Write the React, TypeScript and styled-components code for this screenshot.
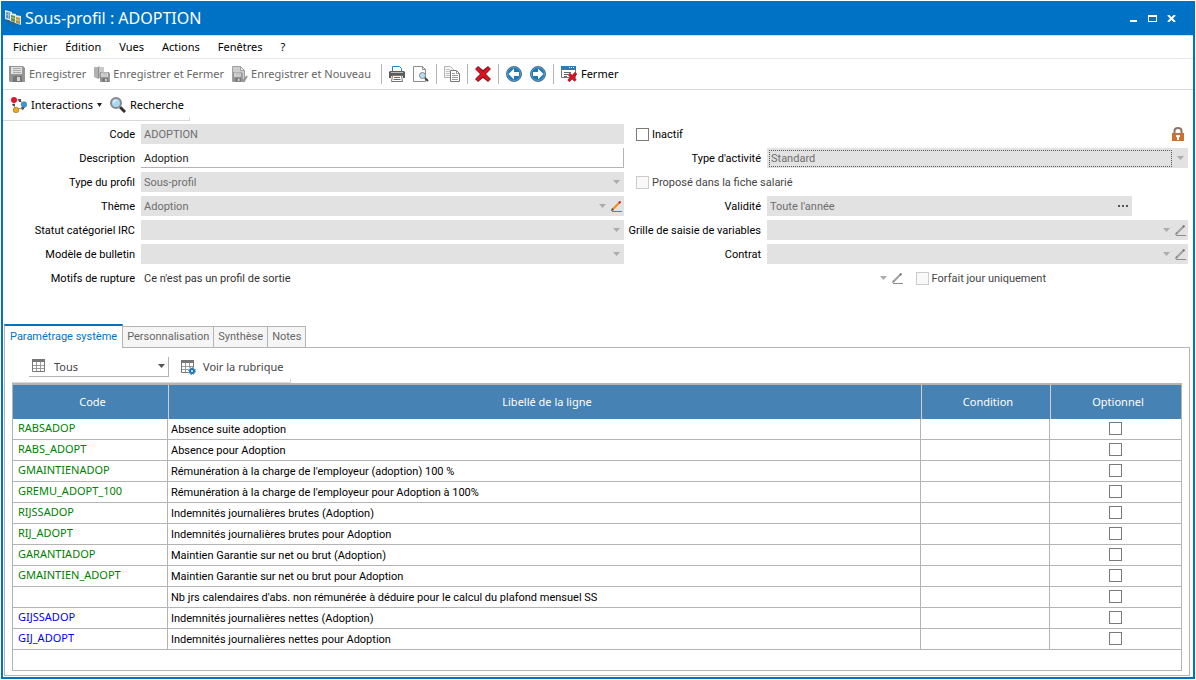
import React from "react";
import type { ReactNode } from "react";
import styled, { createGlobalStyle, css } from "styled-components";

const color = {
  blue: "#0072c6",
  head: "#4682b4",
  grid: "#b4b4b4",
  line: "#d9d9d9",
  field: "#e2e2e2",
  muted: "#6d6d6d",
  text: "#000",
};

const ui = `"Noto Sans", "Open Sans", sans-serif`;
const body = `Roboto, "Liberation Sans", sans-serif`;

const GlobalStyle = createGlobalStyle`
  *, *::before, *::after { box-sizing: border-box; }
  body { margin: 0; background: #fff; color: ${color.text}; font: 11px/16px ${body}; }
  button, input, select { font: inherit; color: inherit; margin: 0; padding: 0; border: 0; border-radius: 0; background: none; }
  svg { display: block; flex: none; }
`;

/* ---------- frame ---------- */

const Frame = styled.div`
  display: flex;
  flex-direction: column;
  min-height: calc(100vh - 2px);
  margin: 1px;
  border: 2px solid ${color.blue};
  border-top: 0;
`;

const TitleBar = styled.header`
  display: flex;
  align-items: center;
  gap: 4px;
  height: 34px;
  padding: 0 12px 0 2px;
  background: ${color.blue};
  color: #fff;
`;

const Title = styled.h1`
  flex: 1;
  margin: 0;
  font: 400 16px/24px ${ui};
`;

const WindowButtons = styled.div`
  display: flex;
`;

const WindowButton = styled.button`
  display: flex;
  width: 19px;
  height: 20px;
  align-items: center;
  justify-content: center;
`;

const MenuBar = styled.nav`
  display: flex;
  gap: 18px;
  height: 24px;
  padding-left: 10px;
  border-top: 1px solid ${color.line};
  border-bottom: 1px solid #e6e6e6;
  font-family: ${ui};
`;

const ToolBar = styled.div`
  display: flex;
  align-items: center;
  height: 31px;
  padding-left: 2px;
  border-bottom: 1px solid ${color.line};
  font-family: ${ui};
`;

const ShortToolBar = styled(ToolBar)`
  position: relative;
  align-self: flex-start;
  padding: 0 2px 0 4px;

  &::after {
    content: "";
    position: absolute;
    right: 0;
    bottom: 0;
    width: 1px;
    height: 3px;
    background: ${color.line};
  }
`;

const ToolButton = styled.button<{ $gap?: number }>`
  display: flex;
  align-items: center;
  gap: ${(p) => p.$gap ?? 4}px;
  height: 24px;
  padding: 0 4px;
  white-space: nowrap;

  &:disabled { color: #666; }
`;

const Separator = styled.span<{ $wide?: boolean }>`
  width: 1px;
  height: 20px;
  margin: 0 3px 0 ${(p) => (p.$wide ? 6 : 3)}px;
  background: ${color.grid};
`;

/* ---------- form ---------- */

const Form = styled.form`
  display: grid;
  grid-template-columns: minmax(0, 621fr) minmax(0, 560fr);
  gap: 4px;
  padding: 3px 5px 36px 0;
`;

const Column = styled.div`
  display: flex;
  flex-direction: column;
  gap: 4px;
`;

const Row = styled.div`
  display: flex;
  align-items: center;
  gap: 6px;
  height: 20px;
`;

const WideRow = styled(Row)`
  grid-column: 1 / -1;
  padding-right: 142px;
`;

const FieldLabel = styled.label<{ $right?: boolean }>`
  flex: none;
  width: ${(p) => (p.$right ? 133 : 132)}px;
  padding-top: 2px;
  text-align: right;
  white-space: nowrap;
`;

const Field = styled.div<{ $kind?: "plain" | "edit"; $tight?: boolean }>`
  display: flex;
  flex: 1;
  align-items: center;
  gap: 5px;
  min-width: 0;
  height: 20px;
  padding-right: ${(p) => (p.$tight ? 2 : 4)}px;
  background: ${color.field};
  color: ${color.muted};

  ${(p) =>
    p.$kind &&
    css`
      background: #fff;
      color: #333;
    `}
  ${(p) =>
    p.$kind === "edit" &&
    css`
      align-items: flex-start;
      border-right: 1px solid ${color.grid};
      border-bottom: 1px solid ${color.grid};
      color: #222;
    `}
`;

const control = css`
  flex: 1;
  min-width: 0;
  height: 20px;
  padding: 0 3px;
  appearance: none;
  opacity: 1;
  outline: 0;
`;

const TextInput = styled.input`
  ${control}
`;

const Select = styled.select<{ $focused?: boolean }>`
  ${control}
  padding-top: 2px;
  ${(p) =>
    p.$focused &&
    css`
      height: 17px;
      margin-left: 2px;
      padding: 0 0 0 1px;
      border: 1px dotted #555;
    `}
`;

const IconButton = styled.button`
  display: flex;
  align-items: center;
  justify-content: center;
`;

const CheckBox = styled.input`
  display: block;
  flex: none;
  appearance: none;
  width: 13px;
  height: 13px;
  border: 1px solid #7a7a7a;
  background: #fff;

  &:disabled { border-color: #ccc; background: #f9f9f9; }
`;

const CheckLabel = styled.label<{ $dim?: boolean }>`
  display: flex;
  align-items: center;
  gap: 3px;
  color: ${(p) => (p.$dim ? "#444" : color.text)};
  white-space: nowrap;
`;

const CheckText = styled.span`
  padding-top: 1px;
`;

const CheckRow = styled(Row)`
  justify-content: space-between;
  padding: 0 4px 0 8px;
`;

const CheckCell = styled.div`
  padding-left: 5px;
`;

const ShortField = styled.div`
  display: flex;
  flex: 1;
  padding-right: 10%;
`;

/* ---------- tabs and table ---------- */

const Tabs = styled.div`
  display: flex;
  align-items: flex-end;
  height: 24px;
  margin-left: 1px;
  z-index: 1;
`;

const Tab = styled.button<{ $active?: boolean }>`
  height: 22px;
  padding: 0 4px;
  border: 1px solid ${color.grid};
  border-left: 0;
  background: #f5f5f5;
  color: #666;

  ${(p) =>
    p.$active &&
    css`
      height: 24px;
      padding: 0 5px;
      border-left: 1px solid ${color.grid};
      border-top: 2px solid ${color.blue};
      border-bottom: 0;
      background: #fff;
      color: ${color.blue};
    `}
`;

const Panel = styled.section`
  display: flex;
  flex: 1;
  flex-direction: column;
  margin: -1px 3px 1px 1px;
  padding: 0 7px 4px;
  border: 1px solid ${color.grid};
`;

const PanelTools = styled(ShortToolBar)`
  gap: 7px;
  height: 35px;
  padding: 3px 4px 0 17px;
  color: #444;
`;

const Filter = styled.label`
  display: flex;
  align-items: center;
  gap: 4px;
  width: 140px;
  height: 20px;
  padding: 0 3px 0 2px;
  border-right: 1px solid ${color.grid};
  border-bottom: 1px solid ${color.grid};
`;

const TableBox = styled.div`
  flex: 1;
  border: 1px solid ${color.grid};
  border-top-width: 2px;
`;

const Table = styled.table`
  width: 100%;
  table-layout: fixed;
  border-spacing: 0;
`;

const Th = styled.th<{ $width?: number }>`
  width: ${(p) => (p.$width ? `${p.$width}px` : "auto")};
  height: 34px;
  padding: 0 0 0 4px;
  border-left: 1px solid #d0d0d0;
  background: ${color.head};
  color: #fff;
  font: 400 11px/16px ${ui};

  &:first-child { border-left: 0; }
`;

const Td = styled.td`
  height: 21px;
  padding: 2px 3px 0;
  border-right: 1px solid ${color.grid};
  border-bottom: 1px solid ${color.grid};
  white-space: nowrap;

  &:last-child { border-right: 0; }
`;

const CodeTd = styled(Td)<{ $tone: string }>`
  padding: 0 5px 2px;
  color: ${(p) => p.$tone};
  font-family: ${ui};
`;

const CheckTd = styled(Td)`
  padding: 0 3px 1px;
  ${CheckBox} { margin: 0 auto; }
`;

/* ---------- icons ---------- */

const Icon = ({ children, w = 16, h = 16 }: { children: ReactNode; w?: number; h?: number }) => (
  <svg width={w} height={h} viewBox={`0 0 ${w} ${h}`} fill="none" aria-hidden="true">
    {children}
  </svg>
);

const AppIcon = () => (
  <Icon>
    <path d="M0 0l7 2v9l-7-2z" fill="#e4eaee" />
    <path d="M1 2l5 1v6l-5-1z" fill="#5b8fc0" />
    <path d="M1 4.500l5 1M3.500 2v6" stroke="#9dc0dd" />
    <path d="M5 3l6 1v9l-6-2z" fill="#e6ece0" />
    <path d="M6 5l4 1v6l-4-1z" fill="#5f9150" />
    <path d="M6 7.500l4 1" stroke="#a6c79b" />
    <path d="M10 5l6 1v9l-6-2z" fill="#ece5cc" />
    <path d="M11 7l4 1v6l-4-1z" fill="#b0924a" />
    <path d="M11 9.500l4 1" stroke="#e0cc96" />
    <path d="M1 10l4 1v3zM6 12l4 1v3z" fill="#54504d" />
  </Icon>
);

const Floppy = ({ x = 0, y = 0, s = 1 }) => (
  <g transform={`translate(${x} ${y}) scale(${s})`}>
    <path d="M0 0h14l2 2v14H1l-1-1z" fill="#949494" />
    <path d="M2 1h11v7H2z" fill="#e2e2e2" />
    <path d="M4 2.500h8M4 4.500h8M4 6.500h8" stroke="#a8a8a8" />
    <path d="M4 10h9v6H4z" fill="#777" />
    <path d="M8 11h3v4H8z" fill="#d4d4d4" />
  </g>
);

const SaveIcon = () => (
  <Icon>
    <Floppy />
  </Icon>
);

const SaveCloseIcon = () => (
  <Icon>
    <path d="M0 1h4l2-1v12l-2 1-4-2z" fill="#b2b2b2" />
    <path d="M5 1h5v6H5z" fill="#c9c9c9" />
    <path d="M4.500 1v11" stroke="#8f8f8f" />
    <Floppy x={6} y={6} s={0.62} />
  </Icon>
);

const SaveNewIcon = () => (
  <Icon>
    <path d="M.5.500h8l4 4v11H.5z" fill="#cdcdcd" stroke="#a0a0a0" />
    <path d="M8.500.500v4h4z" fill="#eee" stroke="#a0a0a0" />
    <Floppy x={1} y={6} s={0.6} />
    <path d="M10 13l2 2 3-5" stroke="#999" strokeWidth="2" />
  </Icon>
);

const PrintIcon = () => (
  <Icon>
    <path d="M3.500 6V.5h7l2 2V6" fill="#fff" stroke="#2b7cb8" />
    <path d="M1 5h14l1 1v6h-2v-2H2v2H0V6z" fill="#5c5c5c" />
    <path d="M2 6.500h12" stroke="#bbb" />
    <path d="M3.500 9.500h9l1 6h-11z" fill="#fff" stroke="#777" />
    <path d="M5 11.500h6M4.500 13.500h7" stroke="#2b7cb8" />
  </Icon>
);

const PreviewIcon = () => (
  <Icon>
    <path d="M.5.500h9l3 3v12H.5z" fill="#fbfbfb" stroke="#8c8c8c" />
    <path d="M9.500.500v3h3" stroke="#8c8c8c" />
    <circle cx="9.500" cy="9.500" r="3" fill="#b9dcf3" stroke="#7d8790" />
    <path d="M12 12l3 3" stroke="#444" strokeWidth="2" />
  </Icon>
);

const CopyIcon = () => (
  <Icon>
    <path d="M.5.500h6l3 3v8H.5z" fill="#f4f4f4" stroke="#b5b5b5" />
    <path d="M2 3.500h4M2 5.500h5M2 7.500h4M2 9.500h4" stroke="#c4c4c4" />
    <path d="M6.500 4.500h6l3 3v8h-9z" fill="#fff" stroke="#777" />
    <path d="M12.500 4.500v3h3M8 7.500h3M8 9.500h6M8 11.500h6M8 13.500h6" stroke="#999" />
  </Icon>
);

const DeleteIcon = () => (
  <Icon>
    <path d="M0 3l3-3 5 4 5-4 3 3-5 5 5 5-3 3-5-4-5 4-3-3 5-5z" fill="#7d1a20" />
    <path d="M1 3l2-2 5 5 5-5 2 2-5 5 5 5-2 2-5-5-5 5-2-2 5-5z" fill="#df1020" />
  </Icon>
);

const ArrowIcon = ({ flip = false }) => (
  <Icon>
    <circle cx="8" cy="8" r="7.500" fill="#1d76b8" stroke="#596c7c" />
    <circle cx="8" cy="8" r="6.500" stroke="#4da0d8" />
    <path d={flip ? "M13.500 8L8 2.500V6H3v4h5v3.500z" : "M2.500 8L8 2.500V6h5v4H8v3.500z"} fill="#fff" />
  </Icon>
);

const CloseFormIcon = () => (
  <Icon>
    <path d="M.5.500h14v11H.5z" fill="#fff" stroke="#777" />
    <path d="M0 0h15v4H0z" fill="#2b7cb8" />
    <path d="M8 1.500h1M10 1.500h1M12 1.500h1" stroke="#fff" />
    <path d="M3 6.500h7M3 8.500h4M3 10.500h3" stroke="#666" />
    <path d="M8 8l6.500 6.500M15 7l-7.500 8" stroke="#8c1a20" strokeWidth="3" />
    <path d="M8 8l6.500 6.500M15 7l-7.500 8" stroke="#e01022" strokeWidth="2" />
  </Icon>
);

const LinksIcon = () => (
  <Icon>
    <path d="M4 3h5l3 4M12 9q-1 3-6 3M3 5q-1 3 1 7" stroke="#8d9297" />
    <path d="M7 2h3v3H8zM11 10h3l-2 3-2-1zM1 7h3v2H2z" fill="#4b4f52" />
    <circle cx="3" cy="3" r="3" fill="#e01433" />
    <circle cx="13" cy="7.500" r="2.800" fill="#2d9be0" stroke="#5b7282" strokeWidth=".6" />
    <circle cx="5" cy="13" r="2.800" fill="#f3a712" stroke="#8a6a24" strokeWidth=".6" />
  </Icon>
);

const SearchIcon = () => (
  <Icon>
    <path d="M10 10l5 5" stroke="#333" strokeWidth="3" />
    <circle cx="6" cy="6" r="5" fill="#a9d8f5" stroke="#85898c" strokeWidth="2" />
    <path d="M3.500 6q0-3 3-3" stroke="#fff" />
  </Icon>
);

const GridIcon = ({ gear = false }) => (
  <Icon>
    <path d="M1.500 1.500h12v12h-12z" fill="#fff" stroke="#777" />
    <path d="M1 1h13v3H1z" fill="#777" />
    <path d="M2 7.500h11M2 10.500h11M5.500 4v9M9.500 4v9" stroke="#999" />
    {gear && (
      <>
        <circle cx="12" cy="12" r="4" fill="#fff" />
        <circle cx="12" cy="12" r="2" stroke="#1d76b8" strokeWidth="2" />
        <circle cx="12" cy="12" r="3.500" stroke="#1d76b8" strokeDasharray="1.400 1.350" />
      </>
    )}
  </Icon>
);

const LockIcon = () => (
  <Icon w={12} h={14}>
    <path d="M2.500 6V4q0-3 3.500-3t3.500 3v2" stroke="#8d7565" strokeWidth="2" />
    <path d="M0 6h12v8H0z" fill="#c4733b" />
    <path d="M5 10h2v3H5zM4 8h4v2H4z" fill="#fff" />
  </Icon>
);

const Caret = ({ tone = "#acacac", w = 7 }) => (
  <Icon w={w} h={4}>
    <path d={`M0 0h${w}L${w / 2} 4z`} fill={tone} />
  </Icon>
);

const Pencil = ({ live = false }) => (
  <Icon w={11} h={11}>
    <path d="M1 10.500h10" stroke={live ? "#2d8ccc" : "#8e8e8e"} />
    <path d="M1.500 8.500l7-7" stroke={live ? "#f08a1c" : "#a0a0a0"} strokeWidth="2" />
    <path d="M8 2l1.500-1.500" stroke={live ? "#cc1d33" : "#777"} strokeWidth="2" />
    <path d="M0 10l1-3 2 2z" fill={live ? "#444" : "#888"} />
  </Icon>
);

/* ---------- pieces ---------- */

type ComboProps = {
  id: string;
  label: string;
  value?: string;
  right?: boolean;
  pencil?: "live" | "off";
  plain?: boolean;
  focused?: boolean;
};

const Combo = ({ id, label, value = "", right, pencil, plain, focused }: ComboProps) => (
  <>
    <FieldLabel htmlFor={id} $right={right}>
      {label}
    </FieldLabel>
    <Field $kind={plain ? "plain" : undefined} $tight={Boolean(pencil)}>
      <Select id={id} disabled $focused={focused}>
        <option>{value}</option>
      </Select>
      <Caret />
      {pencil && (
        <IconButton type="button" aria-label={`Modifier ${label}`} disabled={pencil === "off"}>
          <Pencil live={pencil === "live"} />
        </IconButton>
      )}
    </Field>
  </>
);

const green = "#008000";
const blue = "#0000ff";

const lines: [string, string, string][] = [
  ["RABSADOP", "Absence suite adoption", green],
  ["RABS_ADOPT", "Absence pour Adoption", green],
  ["GMAINTIENADOP", "Rémunération à la charge de l'employeur (adoption) 100 %", green],
  ["GREMU_ADOPT_100", "Rémunération à la charge de l'employeur pour Adoption à 100%", green],
  ["RIJSSADOP", "Indemnités journalières brutes (Adoption)", green],
  ["RIJ_ADOPT", "Indemnités journalières brutes pour Adoption", green],
  ["GARANTIADOP", "Maintien Garantie sur net ou brut (Adoption)", green],
  ["GMAINTIEN_ADOPT", "Maintien Garantie sur net ou brut pour Adoption", green],
  ["", "Nb jrs calendaires d'abs. non rémunérée à déduire pour le calcul du plafond mensuel SS", green],
  ["GIJSSADOP", "Indemnités journalières nettes (Adoption)", blue],
  ["GIJ_ADOPT", "Indemnités journalières nettes pour Adoption", blue],
];

const menus = ["Fichier", "Édition", "Vues", "Actions", "Fenêtres", "?"];

export default function App() {
  return (
    <>
      <GlobalStyle />
      <Frame>
        <TitleBar>
          <AppIcon />
          <Title>Sous-profil : ADOPTION</Title>
          <WindowButtons>
            <WindowButton aria-label="Réduire">
              <Icon w={9} h={7}>
                <path d="M1 5h7v2H1z" fill="#fff" />
              </Icon>
            </WindowButton>
            <WindowButton aria-label="Agrandir">
              <Icon w={9} h={7}>
                <path d="M0 0h9v7H0zM1 2v4h7V2z" fill="#fff" fillRule="evenodd" />
              </Icon>
            </WindowButton>
            <WindowButton aria-label="Fermer la fenêtre">
              <Icon w={9} h={7}>
                <path d="M1 0l7 7M8 0L1 7" stroke="#fff" strokeWidth="2" />
              </Icon>
            </WindowButton>
          </WindowButtons>
        </TitleBar>

        <MenuBar>
          {menus.map((m) => (
            <button key={m}>{m}</button>
          ))}
        </MenuBar>

        <ToolBar>
          <ToolButton disabled><SaveIcon />Enregistrer</ToolButton>
          <ToolButton disabled $gap={3}><SaveCloseIcon />Enregistrer et Fermer</ToolButton>
          <ToolButton disabled $gap={3}><SaveNewIcon />Enregistrer et Nouveau</ToolButton>
          <Separator $wide />
          <ToolButton aria-label="Imprimer"><PrintIcon /></ToolButton>
          <ToolButton aria-label="Aperçu"><PreviewIcon /></ToolButton>
          <Separator />
          <ToolButton aria-label="Dupliquer"><CopyIcon /></ToolButton>
          <Separator />
          <ToolButton aria-label="Supprimer"><DeleteIcon /></ToolButton>
          <Separator />
          <ToolButton aria-label="Précédent"><ArrowIcon /></ToolButton>
          <ToolButton aria-label="Suivant"><ArrowIcon flip /></ToolButton>
          <Separator />
          <ToolButton><CloseFormIcon />Fermer</ToolButton>
        </ToolBar>

        <ShortToolBar>
          <ToolButton><LinksIcon />Interactions<Caret tone="#222" w={5} /></ToolButton>
          <ToolButton><SearchIcon />Recherche</ToolButton>
        </ShortToolBar>

        <Form>
          <Column>
            <Row>
              <FieldLabel htmlFor="code">Code</FieldLabel>
              <Field>
                <TextInput id="code" defaultValue="ADOPTION" disabled />
              </Field>
            </Row>
            <Row>
              <FieldLabel htmlFor="description">Description</FieldLabel>
              <Field $kind="edit">
                <TextInput id="description" defaultValue="Adoption" />
              </Field>
            </Row>
            <Row><Combo id="type" label="Type du profil" value="Sous-profil" /></Row>
            <Row><Combo id="theme" label="Thème" value="Adoption" pencil="live" /></Row>
            <Row><Combo id="statut" label="Statut catégoriel IRC" /></Row>
            <Row><Combo id="modele" label="Modèle de bulletin" /></Row>
          </Column>

          <Column>
            <CheckRow>
              <CheckLabel>
                <CheckBox type="checkbox" />
                <CheckText>Inactif</CheckText>
              </CheckLabel>
              <LockIcon />
            </CheckRow>
            <Row><Combo right id="activite" label="Type d'activité" value="Standard" focused /></Row>
            <CheckRow>
              <CheckLabel $dim>
                <CheckBox type="checkbox" disabled />
                <CheckText>Proposé dans la fiche salarié</CheckText>
              </CheckLabel>
            </CheckRow>
            <Row>
              <FieldLabel htmlFor="validite" $right>Validité</FieldLabel>
              <ShortField>
                <Field>
                  <TextInput id="validite" defaultValue="Toute l'année" disabled />
                  <IconButton type="button" aria-label="Choisir la validité">
                    <Icon w={10} h={2}>
                      <path d="M0 0h2v2H0zM4 0h2v2H4zM8 0h2v2H8z" fill="#555" />
                    </Icon>
                  </IconButton>
                </Field>
              </ShortField>
            </Row>
            <Row><Combo right id="grille" label="Grille de saisie de variables" pencil="off" /></Row>
            <Row><Combo right id="contrat" label="Contrat" pencil="off" /></Row>
          </Column>

          <WideRow>
            <Combo plain id="motifs" label="Motifs de rupture" value="Ce n'est pas un profil de sortie" pencil="off" />
            <CheckCell>
              <CheckLabel $dim>
                <CheckBox type="checkbox" disabled />
                <CheckText>Forfait jour uniquement</CheckText>
              </CheckLabel>
            </CheckCell>
          </WideRow>
        </Form>

        <Tabs role="tablist">
          <Tab role="tab" aria-selected $active>Paramétrage système</Tab>
          <Tab role="tab">Personnalisation</Tab>
          <Tab role="tab">Synthèse</Tab>
          <Tab role="tab">Notes</Tab>
        </Tabs>

        <Panel>
          <PanelTools>
            <Filter>
              <GridIcon />
              <Select aria-label="Filtre">
                <option>Tous</option>
              </Select>
              <Caret tone="#555" />
            </Filter>
            <ToolButton $gap={7}><GridIcon gear />Voir la rubrique</ToolButton>
          </PanelTools>
          <TableBox>
            <Table>
              <thead>
                <tr>
                  <Th $width={155}>Code</Th>
                  <Th>Libellé de la ligne</Th>
                  <Th $width={129}>Condition</Th>
                  <Th $width={131}>Optionnel</Th>
                </tr>
              </thead>
              <tbody>
                {lines.map(([code, label, tone]) => (
                  <tr key={label}>
                    <CodeTd $tone={tone}>{code}</CodeTd>
                    <Td>{label}</Td>
                    <Td />
                    <CheckTd>
                      <CheckBox type="checkbox" aria-label={`Optionnel : ${label}`} />
                    </CheckTd>
                  </tr>
                ))}
              </tbody>
            </Table>
          </TableBox>
        </Panel>
      </Frame>
    </>
  );
}
